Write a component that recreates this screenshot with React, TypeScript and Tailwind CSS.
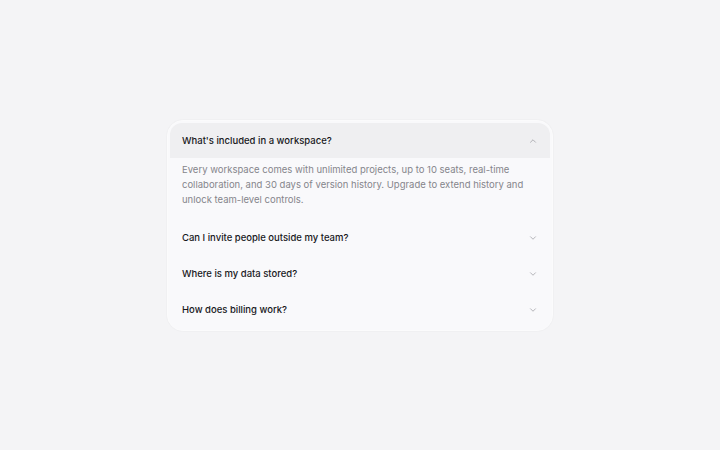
import React, { useState } from "react";
import { ChevronDown, ChevronUp } from "lucide-react";

const items = [
  {
    q: "What's included in a workspace?",
    a: "Every workspace comes with unlimited projects, up to 10 seats, real-time collaboration, and 30 days of version history. Upgrade to extend history and unlock team-level controls.",
  },
  { q: "Can I invite people outside my team?", a: "" },
  { q: "Where is my data stored?", a: "" },
  { q: "How does billing work?", a: "" },
];

export default function App() {
  const [open, setOpen] = useState(0);
  return (
    <div
      className="w-full h-[450px] bg-[#f4f4f6] flex items-center justify-center"
      style={{ fontFamily: "Inter, 'Noto Sans', sans-serif" }}
    >
      <div className="mt-[1px] w-[386px] rounded-2xl bg-[#f9f9fb] border border-[#fbfbfc] p-[2px] flex flex-col shadow-[0_0_0_1px_rgba(0,0,0,0.015)]">
        {items.map((it, i) => {
          const isOpen = open === i;
          return (
            <div key={i} className="flex flex-col">
              <button
                onClick={() => setOpen(isOpen ? -1 : i)}
                className={`${isOpen ? "h-[35px] bg-[#efeff1] rounded-t-xl" : "h-9"} pl-3 pr-3 flex items-center justify-between text-left`}
              >
                <span className="text-[9.5px] font-medium text-[#18181b] pt-[1px]">{it.q}</span>
                {isOpen ? (
                  <ChevronUp size={10} strokeWidth={1.5} className="text-[#8a8a90]" />
                ) : (
                  <ChevronDown size={10} strokeWidth={1.5} className="text-[#8a8a90]" />
                )}
              </button>
              {isOpen && (
                <div className="px-3 pt-1 pb-[13px] text-[9.5px] leading-[15px] text-[#85858b]">
                  {it.a}
                </div>
              )}
            </div>
          );
        })}
      </div>
    </div>
  );
}
